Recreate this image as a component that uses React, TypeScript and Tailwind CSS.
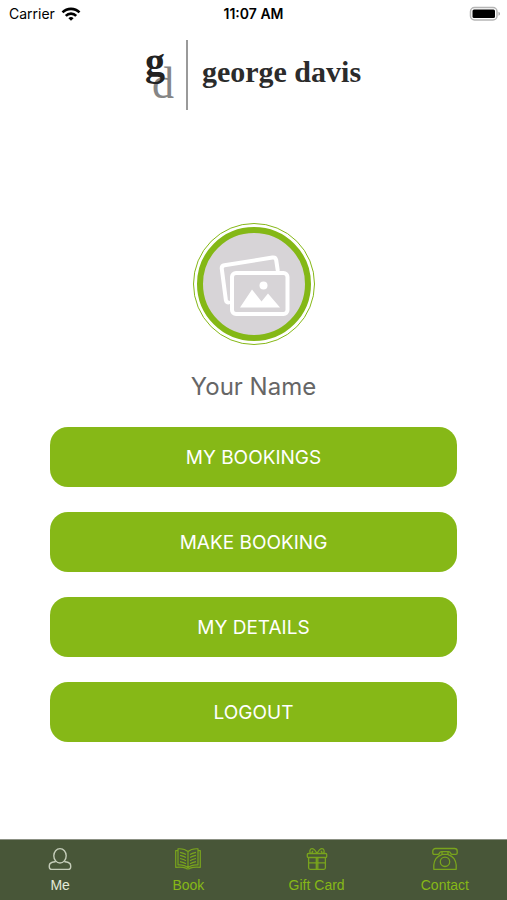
import type { ReactNode } from 'react';

interface Tab {
  label: string;
  icon: ReactNode;
  active?: boolean;
}

const ACTIONS = ['MY BOOKINGS', 'MAKE BOOKING', 'MY DETAILS', 'LOGOUT'];

const TABS: Tab[] = [
  { label: 'Me', icon: <PersonIcon />, active: true },
  { label: 'Book', icon: <BookIcon /> },
  { label: 'Gift Card', icon: <GiftIcon /> },
  { label: 'Contact', icon: <PhoneIcon /> },
];

function PersonIcon() {
  return (
    <svg className="h-6 w-7 opacity-80" viewBox="0 0 28 24" fill="none" stroke="currentColor" strokeWidth="1.4" strokeLinejoin="round">
      <ellipse cx="14" cy="8.800" rx="6.200" ry="7.200" />
      <path d="M9.700 14.300c-1 .6-2.700.7-4 1.200C4.100 16.100 3.300 17.300 3.300 19v1c0 1.500.9 2.400 2.400 2.400h16.600c1.500 0 2.400-.9 2.400-2.400v-1c0-1.700-.8-2.900-2.400-3.500-1.300-.5-3-.6-4-1.200" />
    </svg>
  );
}

function BookIcon() {
  return (
    <svg className="h-6 w-7 opacity-80" viewBox="0 0 28 24" fill="none" stroke="currentColor" strokeWidth="1.2" strokeLinejoin="round">
      <path d="M14 4.500C11.500 2.300 8 1.500 4 1.800V18c4.200-.3 7.500.5 10 2.800 2.500-2.300 5.800-3.100 10-2.800V1.800C20 1.500 16.500 2.300 14 4.500zM14 4.500v16.300" />
      <path d="M4 3.600H1.700v16.700c4-.3 7.500-.2 10.200.8.400 1.200 3.800 1.200 4.200 0 2.700-1 6.200-1.100 10.200-.8V3.600H24" />
      <path d="M6 5.300c2.200.5 4.200 1 6 2.200M6 8.400c2.200.5 4.200 1 6 2.200M6 11.500c2.200.5 4.200 1 6 2.200M6 14.600c2.200.5 4.200 1 6 2.200M22 5.300c-2.200.5-4.200 1-6 2.200M22 8.400c-2.200.5-4.200 1-6 2.200M22 11.500c-2.200.5-4.200 1-6 2.200M22 14.600c-2.200.5-4.200 1-6 2.200" />
    </svg>
  );
}

function GiftIcon() {
  return (
    <svg className="h-6 w-7 opacity-80" viewBox="0 0 28 24" fill="none" stroke="currentColor" strokeWidth="1.3" strokeLinejoin="round">
      <rect x="4.300" y="6.500" width="19.400" height="4" rx="1" />
      <path d="M5.600 10.500v10.300c0 .9.600 1.500 1.500 1.500h13.800c.9 0 1.500-.6 1.500-1.500V10.500M13.300 10.500v11.800M14.800 10.500v11.800M5.600 15.800h16.800" />
      <path d="M7.300 6.500C6.300 4 7 1.700 9 1.700c1.900 0 3.500 2 5 4.800 1.500-2.800 3.100-4.800 5-4.800 2 0 2.700 2.300 1.700 4.800" />
      <path d="M9.300 6.500c-.5-1.300 0-2.300 1-2.300M18.700 6.500c.5-1.300 0-2.300-1-2.300" />
    </svg>
  );
}

function PhoneIcon() {
  return (
    <svg className="h-6 w-7 opacity-80" viewBox="0 0 28 24" fill="none" stroke="currentColor" strokeWidth="1.3" strokeLinejoin="round">
      <path d="M4.500 1.500h19c1.500 0 2.700 1 2.700 2.400V6c0 .9-.5 1.400-1.400 1.400h-3.600c-.9 0-1.500-.5-1.700-1.400-.3-.8-1-1.300-2-1.300h-7c-1 0-1.700.5-2 1.300-.2.9-.8 1.400-1.700 1.400H3.200C2.300 7.400 1.800 6.900 1.800 6V3.900c0-1.400 1.200-2.400 2.700-2.400z" />
      <path d="M11 4.700v2.900C6.300 9 3.300 13 2.800 18v4.300h22.400V18c-.5-5-3.500-9-8.200-10.400V4.700M11 7.300h6" />
      <circle cx="14" cy="14.800" r="4.700" />
    </svg>
  );
}

function StatusBar() {
  return (
    <header className="grid h-7 grid-cols-3 items-center px-1.5 text-sm text-black">
      <div className="flex items-center gap-1.5 pl-[3px]">
        <span>Carrier</span>
        <svg className="h-3.5 w-5" viewBox="0 0 20 14" fill="none" stroke="currentColor" strokeWidth="2.6">
          <path d="M1.500 5.400a12 12 0 0 1 17 0" />
          <path d="M4.800 8.800a7.300 7.300 0 0 1 10.400 0" />
          <path d="M10 13.800 7.400 11.200a3.700 3.700 0 0 1 5.200 0z" fill="currentColor" stroke="none" />
        </svg>
      </div>
      <span className="text-center font-semibold whitespace-nowrap">11:07 AM</span>
      <svg className="h-4 w-8 justify-self-end" viewBox="0 0 32 16">
        <rect x="1.500" y="1.500" width="26.500" height="12.500" rx="4" fill="#fff" stroke="#b5b5b5" strokeWidth="1.5" />
        <rect x="3.500" y="3.500" width="22.500" height="8.500" rx="1.500" fill="#000" />
        <path d="M29.500 5.800c2 .7 2 3.300 0 4z" fill="#a5a5a5" />
      </svg>
    </header>
  );
}

function Logo() {
  return (
    <div className="flex items-center justify-center pt-3">
      <svg className="h-[70px] w-10 overflow-visible font-['Liberation_Serif',serif]" viewBox="0 0 40 70" aria-label="gd">
        <text x="6" y="58" fontSize="44" fill="#858585">d</text>
        <text x="-1" y="35" fontSize="40" fontWeight="700" fill="#222">g</text>
      </svg>
      <div className="h-[70px] w-0.5 bg-[#9a9a9a]" />
      <h1 className="pb-1.5 pl-3.5 font-['Liberation_Serif',serif] text-[30px] leading-8 font-bold text-[#2b2b2b]">george davis</h1>
    </div>
  );
}

function Avatar() {
  return (
    <div className="rounded-full border border-[#86b817] p-[3px]">
      <div className="flex size-[114px] items-center justify-center rounded-full border-[6px] border-[#84b816] bg-[#d7d4d7]">
        <svg className="h-16 w-[72px]" viewBox="0 0 72 64" fill="none" stroke="#fff" strokeWidth="4" strokeLinejoin="round" strokeLinecap="round">
          <path d="M10.500 50.500c-1.500 0-2.200-.8-2.600-2.300L3.800 17c-.3-2 .6-3.300 2.600-3.700L54.500 5.500c2-.3 3.300.6 3.700 2.600l1.500 10" />
          <rect x="14" y="21" width="55.500" height="41" rx="4" />
          <circle cx="45.500" cy="33.500" r="4" fill="#fff" stroke="none" />
          <path d="M22 55.500 34 37.500l9.500 12 6.500-8L62 55.500z" fill="#fff" stroke="none" />
        </svg>
      </div>
    </div>
  );
}

export default function App() {
  return (
    <div className="flex min-h-screen flex-col bg-white font-['Inter',sans-serif]">
      <StatusBar />
      <Logo />

      <main className="flex flex-1 flex-col items-center px-[50px] pt-[113px] pb-12">
        <Avatar />
        <h2 className="mt-[26px] text-[24px] leading-8 text-[#666]">Your Name</h2>
        <div className="mt-6 flex w-full flex-col gap-[25px]">
          {ACTIONS.map((action) => (
            <button key={action} type="button" className="h-[60px] rounded-[18px] bg-[#86b817] pt-0.5 text-[19px] text-white">
              {action}
            </button>
          ))}
        </div>
      </main>

      <nav className="grid h-[61px] grid-cols-4 gap-2 border-t border-[#8c9184] bg-[#485638] pt-[7px] pr-0.5">
        {TABS.map((tab) => (
          <a
            key={tab.label}
            href="#"
            aria-current={tab.active ? 'page' : undefined}
            className={`flex flex-col items-center gap-1 font-['Liberation_Sans',sans-serif] text-sm leading-5 ${tab.active ? 'text-[#e4ead9]' : 'text-[#86b817]'}`}
          >
            {tab.icon}
            <span>{tab.label}</span>
          </a>
        ))}
      </nav>
    </div>
  );
}
